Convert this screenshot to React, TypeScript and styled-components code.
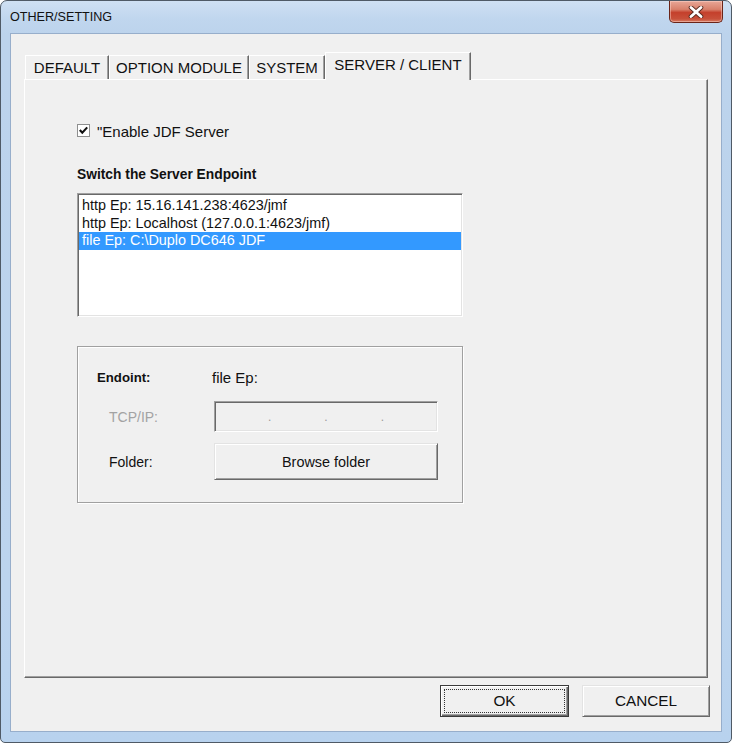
import styled, { createGlobalStyle } from "styled-components"

const GlobalStyle = createGlobalStyle`
    html, body {
        margin: 0;
        padding: 0;
        background: #ffffff;
    }
    * {
        box-sizing: border-box;
    }
`

const endpoints = [
    "http Ep: 15.16.141.238:4623/jmf",
    "http Ep: Localhost (127.0.0.1:4623/jmf)",
    "file Ep: C:\\Duplo DC646 JDF",
]

const tabs = [
    { label: "DEFAULT", width: 84 },
    { label: "OPTION MODULE", width: 140 },
    { label: "SYSTEM", width: 76 },
    { label: "SERVER / CLIENT", width: 146 },
]

function CloseGlyph() {
    return (
        <svg width="18" height="12" viewBox="0 0 18 12">
            <path
                d="M4 1.5 L14 10.5 M14 1.5 L4 10.5"
                stroke="#5a2a20"
                strokeWidth="4.6"
                strokeLinecap="round"
            />
            <path
                d="M4 1.5 L14 10.5 M14 1.5 L4 10.5"
                stroke="#ffffff"
                strokeWidth="2.8"
                strokeLinecap="round"
            />
        </svg>
    )
}

function App() {
    const selectedTab = 3
    const selectedEndpoint = 2

    return (
        <>
            <GlobalStyle />
            <Window>
                <TitleBar>
                    <Title>OTHER/SETTING</Title>
                    <CloseButton>
                        <CloseGlyph />
                    </CloseButton>
                </TitleBar>

                <Client>
                    <TabStrip>
                        {tabs.map((tab, i) => (
                            <Tab
                                key={tab.label}
                                $width={tab.width}
                                $active={i === selectedTab}
                            >
                                {tab.label}
                            </Tab>
                        ))}
                    </TabStrip>

                    <Panel>
                        <CheckRow>
                            <CheckBox>
                                <svg width="11" height="11" viewBox="0 0 11 11">
                                    <path
                                        d="M1.8 5 L4.3 7.8 L9.2 2.4"
                                        stroke="#111"
                                        strokeWidth="2.1"
                                        fill="none"
                                    />
                                </svg>
                            </CheckBox>
                            <CheckLabel>"Enable JDF Server</CheckLabel>
                        </CheckRow>

                        <Heading>Switch the Server Endpoint</Heading>

                        <ListBox>
                            {endpoints.map((ep, i) => (
                                <ListItem
                                    key={ep}
                                    $selected={i === selectedEndpoint}
                                >
                                    {ep}
                                </ListItem>
                            ))}
                        </ListBox>

                        <GroupBox>
                            <FieldRow $height={20} $gap={0}>
                                <FieldLabel $bold>Endoint:</FieldLabel>
                                <FieldValue>file Ep:</FieldValue>
                            </FieldRow>
                            <FieldRow $height={31} $gap={14}>
                                <FieldLabel $indent={12} $disabled>
                                    TCP/IP:
                                </FieldLabel>
                                <IpBox>
                                    <IpSegment />
                                    <IpDot>.</IpDot>
                                    <IpSegment />
                                    <IpDot>.</IpDot>
                                    <IpSegment />
                                    <IpDot>.</IpDot>
                                    <IpSegment />
                                </IpBox>
                            </FieldRow>
                            <FieldRow $height={37} $gap={11}>
                                <FieldLabel $indent={12}>Folder:</FieldLabel>
                                <BrowseButton>Browse folder</BrowseButton>
                            </FieldRow>
                        </GroupBox>
                    </Panel>

                    <Footer>
                        <DialogButton $width={129} $default>
                            <FocusRing>OK</FocusRing>
                        </DialogButton>
                        <DialogButton $width={128}>CANCEL</DialogButton>
                    </Footer>
                </Client>
            </Window>
        </>
    )
}

export default App

const Window = styled.div`
    width: 732px;
    height: 743px;
    display: flex;
    flex-direction: column;
    border: 1px solid #4f5a66;
    border-radius: 7px 7px 5px 5px;
    background: linear-gradient(
        180deg,
        #cfe0f3 0px,
        #c0d6ee 18px,
        #bcd3ec 34px,
        #bcd4ee 80%,
        #b8d2ee 100%
    );
    font-family: "Liberation Sans", Arial, sans-serif;
    color: #111;
    overflow: hidden;
`

const TitleBar = styled.div`
    height: 32px;
    display: flex;
    align-items: flex-start;
`

const Title = styled.span`
    padding-left: 9px;
    line-height: 32px;
    font-size: 12.6px;
    color: #111;
`

const CloseButton = styled.div`
    margin-left: auto;
    margin-right: 8px;
    width: 54px;
    height: 22px;
    display: flex;
    align-items: center;
    justify-content: center;
    border: 1px solid #6a2418;
    border-top: none;
    border-radius: 0 0 5px 5px;
    background: linear-gradient(
        180deg,
        #e8a797 0%,
        #d8806b 40%,
        #c4402c 55%,
        #c8503a 85%,
        #d77d63 100%
    );
    box-shadow: inset 0 0 0 1px rgba(255, 220, 210, 0.45);
`

const Client = styled.div`
    flex: 1;
    margin: 0 9px 10px 9px;
    display: flex;
    flex-direction: column;
    padding: 18px 11px 14px 11px;
    background: #f0f0f0;
    border: 1px solid #97aecb;
`

const TabStrip = styled.div`
    height: 27px;
    margin: 0 2px;
    padding-left: 1px;
    display: flex;
    align-items: flex-end;
`

const Tab = styled.div<{ $width: number; $active?: boolean }>`
    width: ${(p) => p.$width}px;
    height: ${(p) => (p.$active ? 28 : 24)}px;
    margin-bottom: ${(p) => (p.$active ? -1 : 0)}px;
    position: relative;
    z-index: ${(p) => (p.$active ? 1 : 0)};
    display: flex;
    align-items: center;
    justify-content: center;
    padding-bottom: ${(p) => (p.$active ? 4 : 0)}px;
    font-size: 15px;
    white-space: nowrap;
    background: #f0f0f0;
    border-top: 1px solid #ffffff;
    border-left: 1px solid #ffffff;
    border-right: 1px solid #696969;
    box-shadow: inset -1px 0 0 #a0a0a0;
`

const Panel = styled.div`
    flex: 1;
    margin: 0 2px;
    display: flex;
    flex-direction: column;
    padding: 41px 0 0 52px;
    background: #f0f0f0;
    border-top: 1px solid #ffffff;
    border-left: 1px solid #ffffff;
    border-right: 1px solid #696969;
    border-bottom: 1px solid #696969;
    box-shadow: inset -1px -1px 0 #a0a0a0;
`

const CheckRow = styled.div`
    height: 18px;
    display: flex;
    align-items: center;
    gap: 7px;
`

const CheckBox = styled.div`
    width: 13px;
    height: 13px;
    display: flex;
    align-items: center;
    justify-content: center;
    background: #ffffff;
    border: 1px solid #8e8f8f;
`

const CheckLabel = styled.span`
    font-size: 15px;
    margin-top: 2px;
`

const Heading = styled.div`
    margin-top: 27px;
    height: 18px;
    line-height: 18px;
    font-size: 13.8px;
    font-weight: bold;
`

const ListBox = styled.div`
    margin-top: 9px;
    width: 386px;
    height: 124px;
    padding: 3px 1px 0 1px;
    background: #ffffff;
    border: 1px solid;
    border-color: #a0a0a0 #ffffff #ffffff #a0a0a0;
    box-shadow: inset 1px 1px 0 #696969, inset -1px -1px 0 #e3e3e3;
`

const ListItem = styled.div<{ $selected?: boolean }>`
    height: 17.5px;
    line-height: 17.5px;
    padding-left: 3px;
    font-size: 14.4px;
    white-space: nowrap;
    color: ${(p) => (p.$selected ? "#ffffff" : "#111")};
    background: ${(p) => (p.$selected ? "#3399ff" : "transparent")};
`

const GroupBox = styled.div`
    margin-top: 29px;
    width: 386px;
    height: 157px;
    padding: 20px 0 0 0;
    display: flex;
    flex-direction: column;
    border: 1px solid #a0a0a0;
    box-shadow: inset 1px 1px 0 #ffffff, 1px 1px 0 #ffffff;
`

const FieldRow = styled.div<{ $height: number; $gap: number }>`
    height: ${(p) => p.$height}px;
    margin-top: ${(p) => p.$gap}px;
    display: flex;
    align-items: center;
`

const FieldLabel = styled.span<{
    $bold?: boolean
    $indent?: number
    $disabled?: boolean
}>`
    width: 136px;
    padding-left: ${(p) => 19 + (p.$indent ?? 0)}px;
    font-size: ${(p) => (p.$bold ? 13.2 : 14)}px;
    font-weight: ${(p) => (p.$bold ? "bold" : "normal")};
    color: ${(p) => (p.$disabled ? "#a3a3a3" : "#111")};
`

const FieldValue = styled.span`
    margin-left: -2px;
    font-size: 15px;
`

const IpBox = styled.div`
    width: 224px;
    height: 31px;
    display: flex;
    align-items: center;
    background: #f0f0f0;
    border: 1px solid;
    border-color: #a0a0a0 #ffffff #ffffff #a0a0a0;
    box-shadow: inset 1px 1px 0 #696969, inset -1px -1px 0 #e3e3e3;
`

const IpSegment = styled.span`
    flex: 1;
`

const IpDot = styled.span`
    font-size: 12px;
    color: #9a9a9a;
    line-height: 1;
`

const BrowseButton = styled.div`
    width: 224px;
    height: 37px;
    display: flex;
    align-items: center;
    justify-content: center;
    font-size: 14.4px;
    background: #f0f0f0;
    border: 1px solid;
    border-color: #e3e3e3 #696969 #696969 #e3e3e3;
    box-shadow: inset 1px 1px 0 #ffffff, inset -1px -1px 0 #a0a0a0;
`

const Footer = styled.div`
    margin-top: 7px;
    height: 32px;
    display: flex;
    justify-content: flex-end;
    gap: 13px;
`

const DialogButton = styled.div<{ $width: number; $default?: boolean }>`
    width: ${(p) => p.$width}px;
    height: 32px;
    display: flex;
    align-items: center;
    justify-content: center;
    padding: ${(p) => (p.$default ? "3px" : "0")};
    font-size: 15.3px;
    background: #f0f0f0;
    border: 1px solid;
    border-color: ${(p) =>
        p.$default
            ? "#3a3a3a"
            : "#e3e3e3 #696969 #696969 #e3e3e3"};
    box-shadow: ${(p) =>
        p.$default
            ? "inset 1px 1px 0 #ffffff, inset -1px -1px 0 #696969, inset -2px -2px 0 #a0a0a0"
            : "inset 1px 1px 0 #ffffff, inset -1px -1px 0 #a0a0a0"};
`

const FocusRing = styled.div`
    width: 100%;
    height: 100%;
    display: flex;
    align-items: center;
    justify-content: center;
    border: 1px dotted #333;
`
